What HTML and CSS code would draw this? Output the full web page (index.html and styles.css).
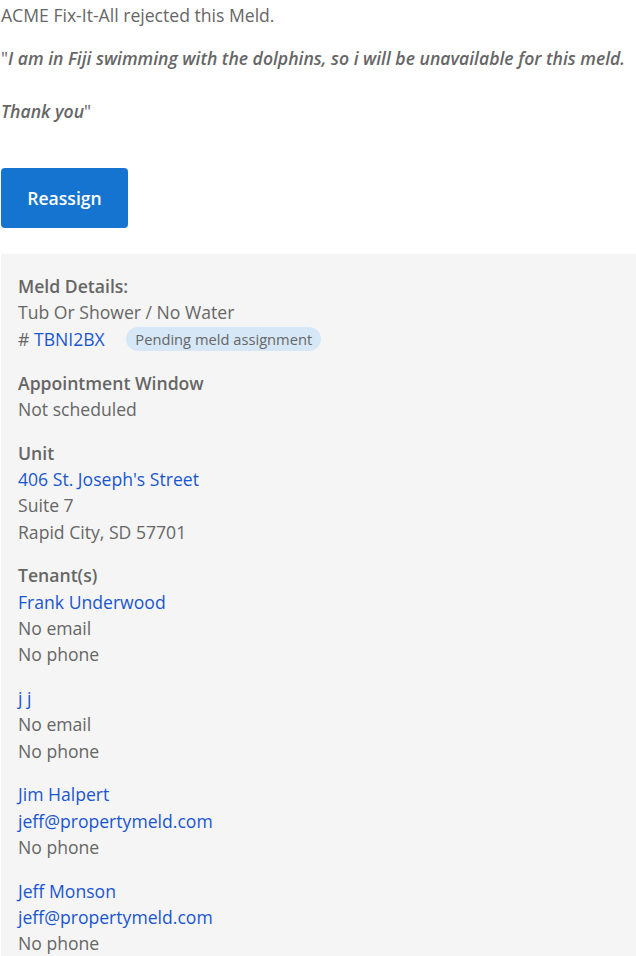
FILE: index.html
```html
<!DOCTYPE html>
<html lang="en">
<head>
  <meta charset="UTF-8">
  <title>Meld rejected</title>
  <link rel="stylesheet" href="styles.css">
</head>
<body>
  <p class="intro">ACME Fix-It-All rejected this Meld.</p>
  <p class="reason">"<strong><em>I am in Fiji swimming with the dolphins, so i will be unavailable for this meld.<br><br>Thank you</em></strong>"</p>
  <a class="btn" href="#">Reassign</a>

  <div class="details">
    <div class="block">
      <div class="label">Meld Details:</div>
      <div>Tub Or Shower / No Water</div>
      <div># <a href="#">TBNI2BX</a> <span class="badge">Pending meld assignment</span></div>
    </div>
    <div class="block">
      <div class="label">Appointment Window</div>
      <div>Not scheduled</div>
    </div>
    <div class="block">
      <div class="label">Unit</div>
      <div><a href="#">406 St. Joseph's Street</a></div>
      <div>Suite 7</div>
      <div>Rapid City, SD 57701</div>
    </div>
    <div class="block">
      <div class="label">Tenant(s)</div>
      <div><a href="#">Frank Underwood</a></div>
      <div>No email</div>
      <div>No phone</div>
    </div>
    <div class="block">
      <div><a href="#">j j</a></div>
      <div>No email</div>
      <div>No phone</div>
    </div>
    <div class="block">
      <div><a href="#">Jim Halpert</a></div>
      <div><a href="#">jeff@propertymeld.com</a></div>
      <div>No phone</div>
    </div>
    <div class="block">
      <div><a href="#">Jeff Monson</a></div>
      <div><a href="#">jeff@propertymeld.com</a></div>
      <div>No phone</div>
    </div>
  </div>
</body>
</html>
```

FILE: styles.css
```css
body {
  margin: 0 0 0 1px;
  font-family: 'Open Sans', sans-serif;
  font-size: 17.6px;
  line-height: 26.3px;
  color: #666;
  background: #fff;
}
a {
  color: #1a55d1;
  text-decoration: none;
}
.intro {
  margin: 2px 0 17px;
}
.reason {
  margin: 0 0 44px;
}
.reason strong {
  font-weight: 600;
}
.btn {
  display: inline-block;
  width: 127px;
  height: 60px;
  line-height: 60px;
  text-align: center;
  background-color: #1474cf;
  color: #fff;
  font-weight: 600;
  border-radius: 4px;
}
.details {
  margin-top: 26px;
  background: #f5f5f5;
  padding: 19px 17px 20px;
}
.block {
  margin-bottom: 17.5px;
}
.label {
  font-weight: 600;
}
.badge {
  display: inline-block;
  margin-left: 17px;
  padding: 0 9px;
  line-height: 24px;
  font-size: 14.7px;
  background: #d6e8f7;
  border-radius: 12px;
  vertical-align: 1px;
}
```
